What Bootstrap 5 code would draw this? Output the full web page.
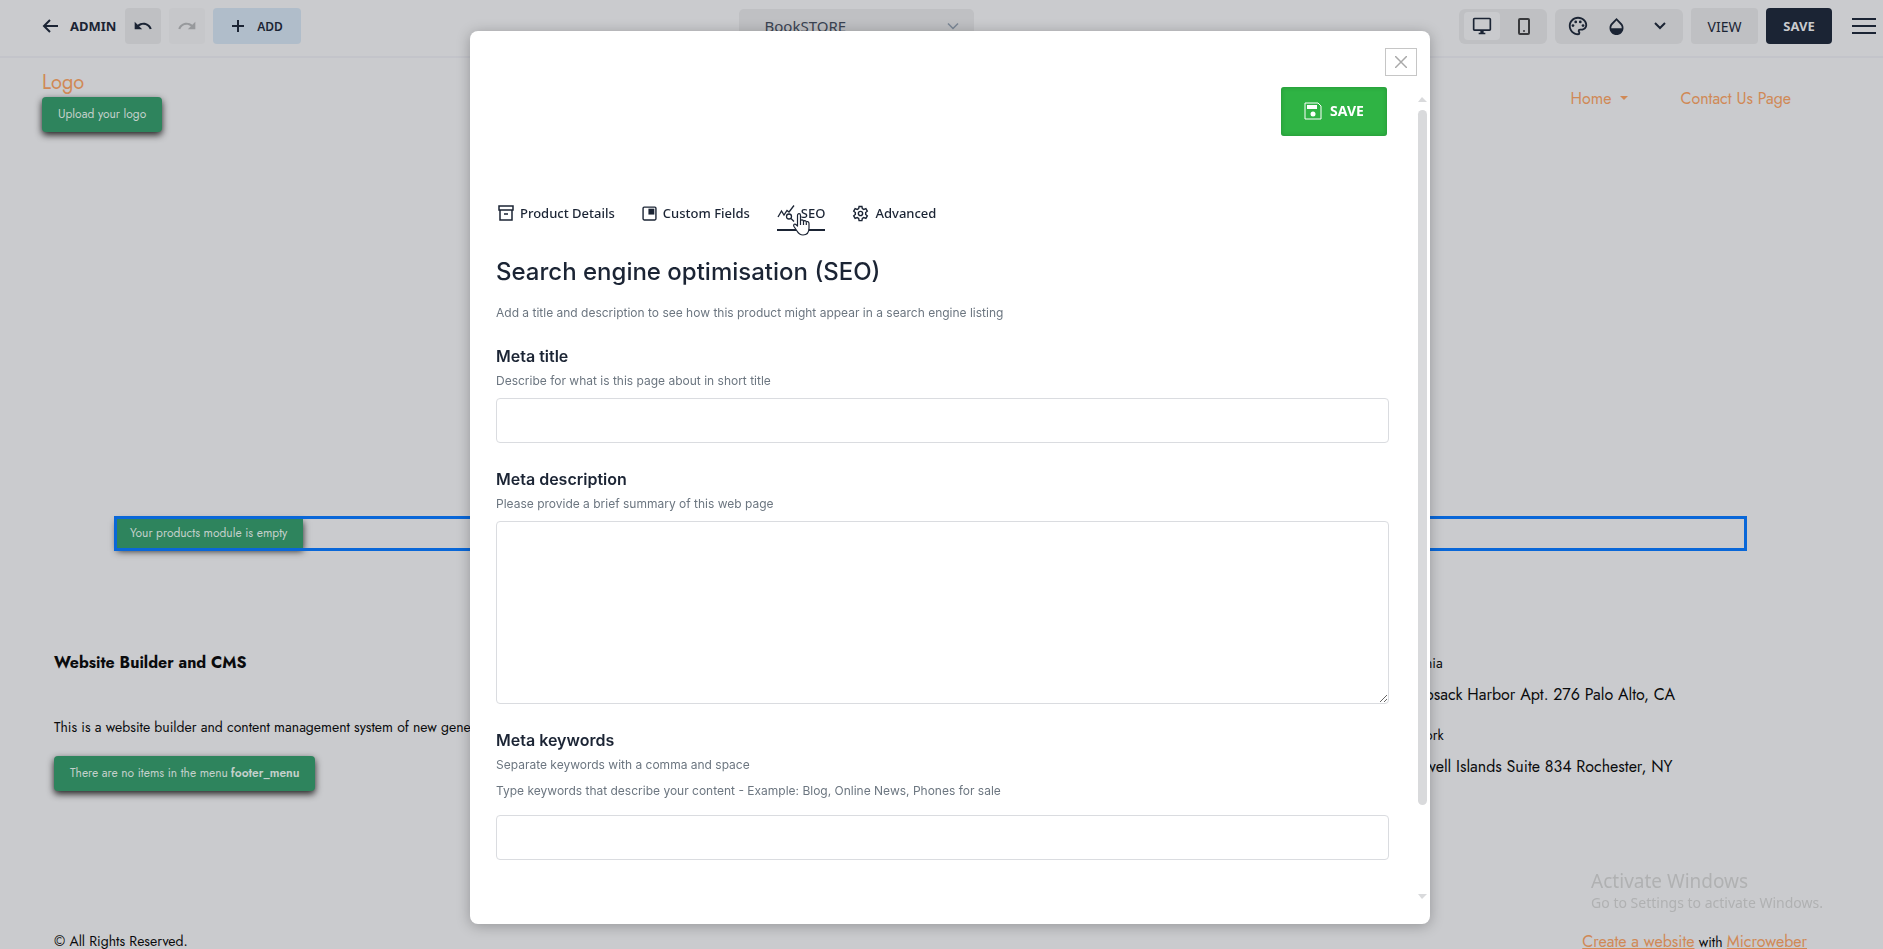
<!DOCTYPE html>
<html lang="en">
<head>
<meta charset="utf-8">
<meta name="viewport" content="width=device-width, initial-scale=1">
<title>BookSTORE</title>
<link rel="stylesheet" href="https://cdn.jsdelivr.net/npm/bootstrap@5.3.0/dist/css/bootstrap.min.css">
<style>
:root{--ink:#1b2434;--site:#cacbce;--chip:#bfc0c3;--orange:#d08956;--green:#2e845d}
body{background:var(--site);font-family:Jost,Lato,sans-serif;color:#0a0b0d;height:100vh;overflow:hidden;font-size:14px;line-height:21px}
svg{display:block;flex:none}
.ui-font{font-family:"Noto Sans",sans-serif}
.inter{font-family:Inter,sans-serif}

/* editor toolbar */
.topbar{height:58px;padding:8px 7px 12px 42px;border-bottom:2px solid #c3c4ca;color:var(--ink)}
.admin-link{color:var(--ink)}
.admin-word{font-size:13px;width:49px;padding-left:2px}
.tool{height:36px;border:0;border-radius:4px;background:var(--chip);color:var(--ink);padding:0;display:flex;align-items:center;justify-content:center}
.tool-sq{width:36px}
.tool-dim{background:#c6c7ca;color:#97999c}
.tool-add{background:#b0bdca;width:88px;gap:12px;font-size:12px;font-weight:600}
.tool-group{height:35px;border-radius:6px;background:var(--chip);padding:0 5px;gap:6px}
.tool-group.tight{gap:2px}
.tool-group.tight .tool:last-child{margin-left:6px}
.tool-on{height:28px;background:#c9cacd}
.site-pick{width:235px;height:35px;border:0;border-radius:5px;color:#3a4352;font-size:15px;padding:0 26px;background-color:var(--chip);background-image:url("data:image/svg+xml,%3Csvg xmlns='http://www.w3.org/2000/svg' viewBox='0 0 12 12'%3E%3Cpath fill='none' stroke='%237b8796' stroke-width='1.500' d='M1 3.500l5 5 5-5'/%3E%3C/svg%3E");background-size:12px;background-position:right 15px center}
.view-btn{width:67px;font-size:14px}
.save-top{width:66px;background:var(--ink);color:#c9cacd;font-size:13px;font-weight:700}

/* edited site */
.site-head{padding:11px 92px 0 42px}
.site-link{color:var(--orange);font-size:16px}
.site-link:hover{color:var(--orange)}
.logo-word{font-size:20px;line-height:28px}
.site-menu{gap:52px;padding-top:19px}
.dropdown-toggle::after{margin-left:9px}
.green-tag{background:var(--green);color:#c3d0cb;border-radius:4px;height:35px;width:fit-content;padding:0 16px;font-size:12px;font-weight:400;display:flex;align-items:center;gap:3px;white-space:nowrap;box-shadow:0 3px 7px #222}
.green-tag b{font-weight:600}
.module-box{margin:384px 136px 0 114px;border:3px solid #0967d8;height:35px}
.module-box .green-tag{height:29px;padding:0 16px 0 13px;border-radius:0;position:relative;z-index:-1}
.site-foot{padding:100px 207px 0 54px}
.foot-title{font-size:16px;line-height:24px;margin-bottom:42px}
.foot-text{margin-bottom:18px}
.foot-right{width:251px;padding-top:2px}
.foot-right dt{font-weight:400;margin-bottom:9px}
.foot-right dd{font-size:16px;line-height:24px;margin-bottom:18px}
.foot-end{padding:140px 76px 0 54px}
.watermark{right:60px;bottom:35px;color:#b0b1b2;font-size:14px;line-height:22px}
.watermark strong{font-size:19px;font-weight:400;display:block}

/* product dialog */
.backdrop-pane{inset:0;padding:31px 0 25px 17px}
.dialog-pane{width:960px;background:#fff;border-radius:8px;box-shadow:0 2px 14px #0004;color:var(--ink);padding:17px 3px 0 26px}
.close-box{width:32px;height:28px;border:1px solid #c6c6c6;background:#fff;margin-right:10px;color:#a9a9a9}
.pane-form{padding-right:29px}
.save-main{width:106px;height:49px;border:0;border-radius:3px;background:#2fb344;color:#fff;font-size:14px;font-weight:700;box-shadow:inset 0 0 4px #1b7a2c99;margin:11px 2px 0 0;padding-bottom:3px}
.tabs-row{gap:27px;margin-top:61px;padding-left:2px}
.tab-link{color:var(--ink);text-decoration:none;font-size:13px;font-weight:500;height:34px;display:flex;align-items:center;gap:6px;border-bottom:2px solid transparent}
.tab-link.on{border-color:var(--ink)}
.pointer{position:absolute;left:16px;top:16px}
.pane-title{font-size:24px;line-height:32px;font-weight:500;margin:25px 0 16px}
.note-line{font-size:12px;line-height:18px;color:#6c7680;margin:0 0 8px}
.note-line.wide{margin-bottom:15px}
.meta-label{font-size:16px;line-height:24px;font-weight:600;display:block;margin:24px 0 4px}
.meta-label.first{margin-top:22px}
.field{height:45px;border:1px solid #dadce0;border-radius:4px;font-size:14px}
textarea.field{height:183px}
.rail{width:9px;margin-top:21px;padding-bottom:25px}
.rail-up,.rail-down{width:9px;border:5px solid transparent;border-left-width:4px}
.rail-up{border-top:0;border-bottom-color:#d9dadc}
.rail-down{border-bottom:0;border-top-color:#d9dadc}
.rail-thumb{height:695px;border-radius:5px;background:#d9dadc;margin-top:8px}
</style>
</head>
<body>
<nav class="topbar ui-font d-flex align-items-center justify-content-between">
  <div class="d-flex align-items-center">
    <a href="#" class="admin-link d-flex align-items-center gap-2 text-decoration-none fw-bold">
      <svg width="18" height="16" viewBox="0 0 18 16" fill="none" stroke="currentColor" stroke-width="2"><path d="M16 8H2M8 2L2 8l6 6"/></svg>
      <span class="admin-word">ADMIN</span></a>
    <button class="tool tool-sq ms-2" aria-label="Undo"><svg width="20" height="20" viewBox="0 0 24 24" fill="currentColor"><path d="M12.500 8c-2.650 0-5.050 1-6.900 2.600L2 7v9h9l-3.620-3.620c1.390-1.160 3.160-1.880 5.120-1.880 3.540 0 6.550 2.310 7.600 5.500l2.370-.78C21.080 11.030 17.150 8 12.500 8z"/></svg></button>
    <button class="tool tool-sq tool-dim ms-2" aria-label="Redo"><svg width="20" height="20" viewBox="0 0 24 24" fill="currentColor"><path d="M11.500 8c2.650 0 5.050 1 6.900 2.600L22 7v9h-9l3.620-3.620c-1.390-1.160-3.160-1.880-5.120-1.880-3.540 0-6.550 2.310-7.600 5.500l-2.370-.78C2.920 11.030 6.850 8 11.500 8z"/></svg></button>
    <button class="tool tool-add ms-2"><svg width="14" height="14" viewBox="0 0 14 14" stroke="currentColor" stroke-width="2"><path d="M7 1v12M1 7h12"/></svg>ADD</button>
  </div>
  <select class="site-pick form-select me-5" aria-label="Page"><option>BookSTORE</option></select>
  <div class="d-flex align-items-center gap-2">
    <div class="tool-group d-flex align-items-center">
      <button class="tool tool-sq tool-on" aria-label="Desktop"><svg width="20" height="20" viewBox="0 0 24 24" fill="currentColor"><path d="M21 2H3c-1.100 0-2 .9-2 2v12c0 1.100.9 2 2 2h7v2H8v2h8v-2h-2v-2h7c1.100 0 2-.9 2-2V4c0-1.100-.9-2-2-2zm0 14H3V4h18v12z"/></svg></button>
      <button class="tool tool-sq bg-transparent" aria-label="Phone"><svg width="12" height="17" viewBox="0 0 12 17" fill="none" stroke="#38393c" stroke-width="2"><rect x="1" y="1" width="10" height="15" rx="1"/><circle cx="6" cy="13" r="1" fill="#38393c" stroke="none"/></svg></button>
    </div>
    <div class="tool-group tight d-flex align-items-center">
      <button class="tool tool-sq bg-transparent" aria-label="Palette"><svg width="22" height="22" viewBox="0 0 24 24" fill="currentColor"><path d="M12 22C6.490 22 2 17.510 2 12S6.490 2 12 2s10 4.040 10 9c0 3.310-2.690 6-6 6h-1.770c-.28 0-.5.220-.5.500 0 .12.050.23.130.33.410.47.640 1.060.64 1.670A2.500 2.500 0 0 1 12 22zm0-18c-4.410 0-8 3.590-8 8s3.590 8 8 8c.28 0 .5-.22.5-.5a.54.54 0 0 0-.14-.35c-.41-.46-.63-1.050-.63-1.650a2.500 2.500 0 0 1 2.500-2.500H16c2.210 0 4-1.790 4-4 0-3.860-3.590-7-8-7z"/><circle cx="6.500" cy="11.500" r="1.500"/><circle cx="9.500" cy="7.500" r="1.500"/><circle cx="14.500" cy="7.500" r="1.500"/><circle cx="17.500" cy="11.500" r="1.500"/></svg></button>
      <button class="tool tool-sq bg-transparent" aria-label="Opacity"><svg width="21" height="21" viewBox="0 0 24 24" fill="currentColor"><path d="M17.660 8L12 2.350 6.340 8C4.780 9.560 4 11.640 4 13.640s.78 4.110 2.340 5.670 3.610 2.350 5.660 2.350 4.100-.79 5.660-2.350S20 15.640 20 13.640 19.220 9.560 17.660 8zM6 14c.01-2 .62-3.270 1.760-4.400L12 5.270l4.240 4.380C17.380 10.770 17.990 12 18 14H6z"/></svg></button>
      <button class="tool tool-sq bg-transparent" aria-label="More"><svg width="12" height="8" viewBox="0 0 12 8" fill="none" stroke="currentColor" stroke-width="2"><path d="M1 1l5 5 5-5"/></svg></button>
    </div>
    <button class="tool view-btn">VIEW</button>
    <button class="tool save-top">SAVE</button>
    <button class="btn p-0 border-0 ms-2" aria-label="Menu"><svg class="ms-1" width="24" height="16" viewBox="0 0 24 16" stroke="#1b2434" stroke-width="2"><path d="M0 1h24M0 8h24M0 15h24"/></svg></button>
  </div>
</nav>

<header class="site-head d-flex justify-content-between">
  <div><a href="#" class="site-link logo-word d-block text-decoration-none">Logo</a><span class="green-tag">Upload your logo</span></div>
  <div class="site-menu d-flex align-items-start">
    <a href="#" class="site-link text-decoration-none dropdown-toggle">Home</a>
    <a href="#" class="site-link text-decoration-none">Contact Us Page</a>
  </div>
</header>
<main class="module-box"><span class="green-tag">Your products module is empty</span></main>
<footer>
  <div class="site-foot d-flex justify-content-between">
    <div>
      <h2 class="foot-title fw-bold">Website Builder and CMS</h2>
      <p class="foot-text">This is a website builder and content management system of new generation</p>
      <span class="green-tag">There are no items in the menu <b>footer_menu</b></span>
    </div>
    <dl class="foot-right text-nowrap mb-0"><dt>nia</dt><dd>osack Harbor Apt. 276 Palo Alto, CA</dd><dt>ork</dt><dd class="mb-0">well Islands Suite 834 Rochester, NY</dd></dl>
  </div>
  <div class="foot-end d-flex justify-content-between">
    <span>© All Rights Reserved.</span>
    <span><a href="#" class="site-link">Create a website</a> with <a href="#" class="site-link">Microweber</a></span>
  </div>
</footer>
<div class="watermark ui-font position-fixed"><strong>Activate Windows</strong>Go to Settings to activate Windows.</div>

<div class="backdrop-pane position-fixed d-flex justify-content-center">
  <section class="dialog-pane d-flex flex-column" role="dialog" aria-label="Edit product">
    <div class="d-flex justify-content-end"><button class="close-box p-0 d-flex align-items-center justify-content-center" aria-label="Close"><svg width="12" height="12" viewBox="0 0 12 12" stroke="currentColor" stroke-width="1.500"><path d="M0 0l12 12M12 0L0 12"/></svg></button></div>
    <div class="d-flex flex-grow-1">
      <form class="flex-grow-1 pane-form">
        <div class="d-flex justify-content-end"><button type="button" class="save-main ui-font d-flex align-items-center justify-content-center gap-2"><svg width="18" height="18" viewBox="0 0 18 18" fill="none" stroke="currentColor"><path d="M1 1h13l3 3v13H1z"/><path fill="currentColor" stroke="none" d="M3 3h10v4H3z"/><circle cx="9" cy="12" r="2.500" fill="currentColor" stroke="none"/></svg>SAVE</button></div>
        <div class="tabs-row ui-font d-flex">
          <a href="#" class="tab-link"><svg width="16" height="16" viewBox="0 0 16 16" fill="none" stroke="currentColor" stroke-width="1.500"><path d="M1 1h14v4H1zM2 5v10h12V5M6 9h4"/></svg>Product Details</a>
          <a href="#" class="tab-link"><svg width="15" height="15" viewBox="0 0 14 14" fill="none" stroke="currentColor" stroke-width="1.300"><rect x="1" y="1" width="12" height="12" rx="1"/><path fill="currentColor" stroke="none" d="M6 2.500h5.500V8H6z"/></svg>Custom Fields</a>
          <a href="#" class="tab-link on position-relative"><svg width="18" height="17" viewBox="0 0 18 17" fill="none" stroke="currentColor" stroke-width="1.300"><path d="M1 12l3.500-6 2.500 4 3-4.500 2 1.500 5-6.500"/><circle cx="12" cy="11.500" r="2.500"/><path d="M14 13.500l3 3"/></svg>SEO
            <svg class="pointer" width="17" height="23" viewBox="0 0 17 23" fill="#fff" stroke="#1b2434" stroke-width="1.200" stroke-linejoin="round"><path d="M4.500 13V2.500c0-2.500 3-2.500 3 0V8c.3-1.500 2.800-1.500 3 .5.400-1.400 2.700-1.200 2.800.7.500-1.200 2.700-.8 2.700 1.300V15c0 4-2 7-6 7-3.500 0-4.500-1.500-6-4L1 13.500c-1-2 .8-3.200 2.200-1.700z"/><path fill="none" d="M7.500 8v4M10.500 8.500V12M13.300 9.500V12"/></svg></a>
          <a href="#" class="tab-link"><svg width="17" height="17" viewBox="0 0 24 24" fill="none" stroke="currentColor" stroke-width="2"><circle cx="12" cy="12" r="3"/><path d="M10 2h4l.6 3 2 1.200 3-1 2 3.500-2.300 2v2.600l2.300 2-2 3.500-3-1-2 1.200-.6 3h-4l-.6-3-2-1.200-3 1-2-3.500 2.300-2v-2.600l-2.300-2 2-3.500 3 1 2-1.200z"/></svg>Advanced</a>
        </div>
        <div class="inter">
          <h1 class="pane-title">Search engine optimisation (SEO)</h1>
          <p class="note-line">Add a title and description to see how this product might appear in a search engine listing</p>
          <label class="meta-label first" for="mt">Meta title</label>
          <p class="note-line">Describe for what is this page about in short title</p>
          <input id="mt" type="text" class="field form-control">
          <label class="meta-label" for="md">Meta description</label>
          <p class="note-line">Please provide a brief summary of this web page</p>
          <textarea id="md" class="field form-control"></textarea>
          <label class="meta-label" for="mk">Meta keywords</label>
          <p class="note-line">Separate keywords with a comma and space</p>
          <p class="note-line wide">Type keywords that describe your content - Example: Blog, Online News, Phones for sale</p>
          <input id="mk" type="text" class="field form-control">
        </div>
      </form>
      <div class="rail d-flex flex-column justify-content-between"><div><div class="rail-up"></div><div class="rail-thumb"></div></div><div class="rail-down"></div></div>
    </div>
  </section>
</div>
<script src="https://cdn.jsdelivr.net/npm/bootstrap@5.3.0/dist/js/bootstrap.bundle.min.js"></script>
</body>
</html>
